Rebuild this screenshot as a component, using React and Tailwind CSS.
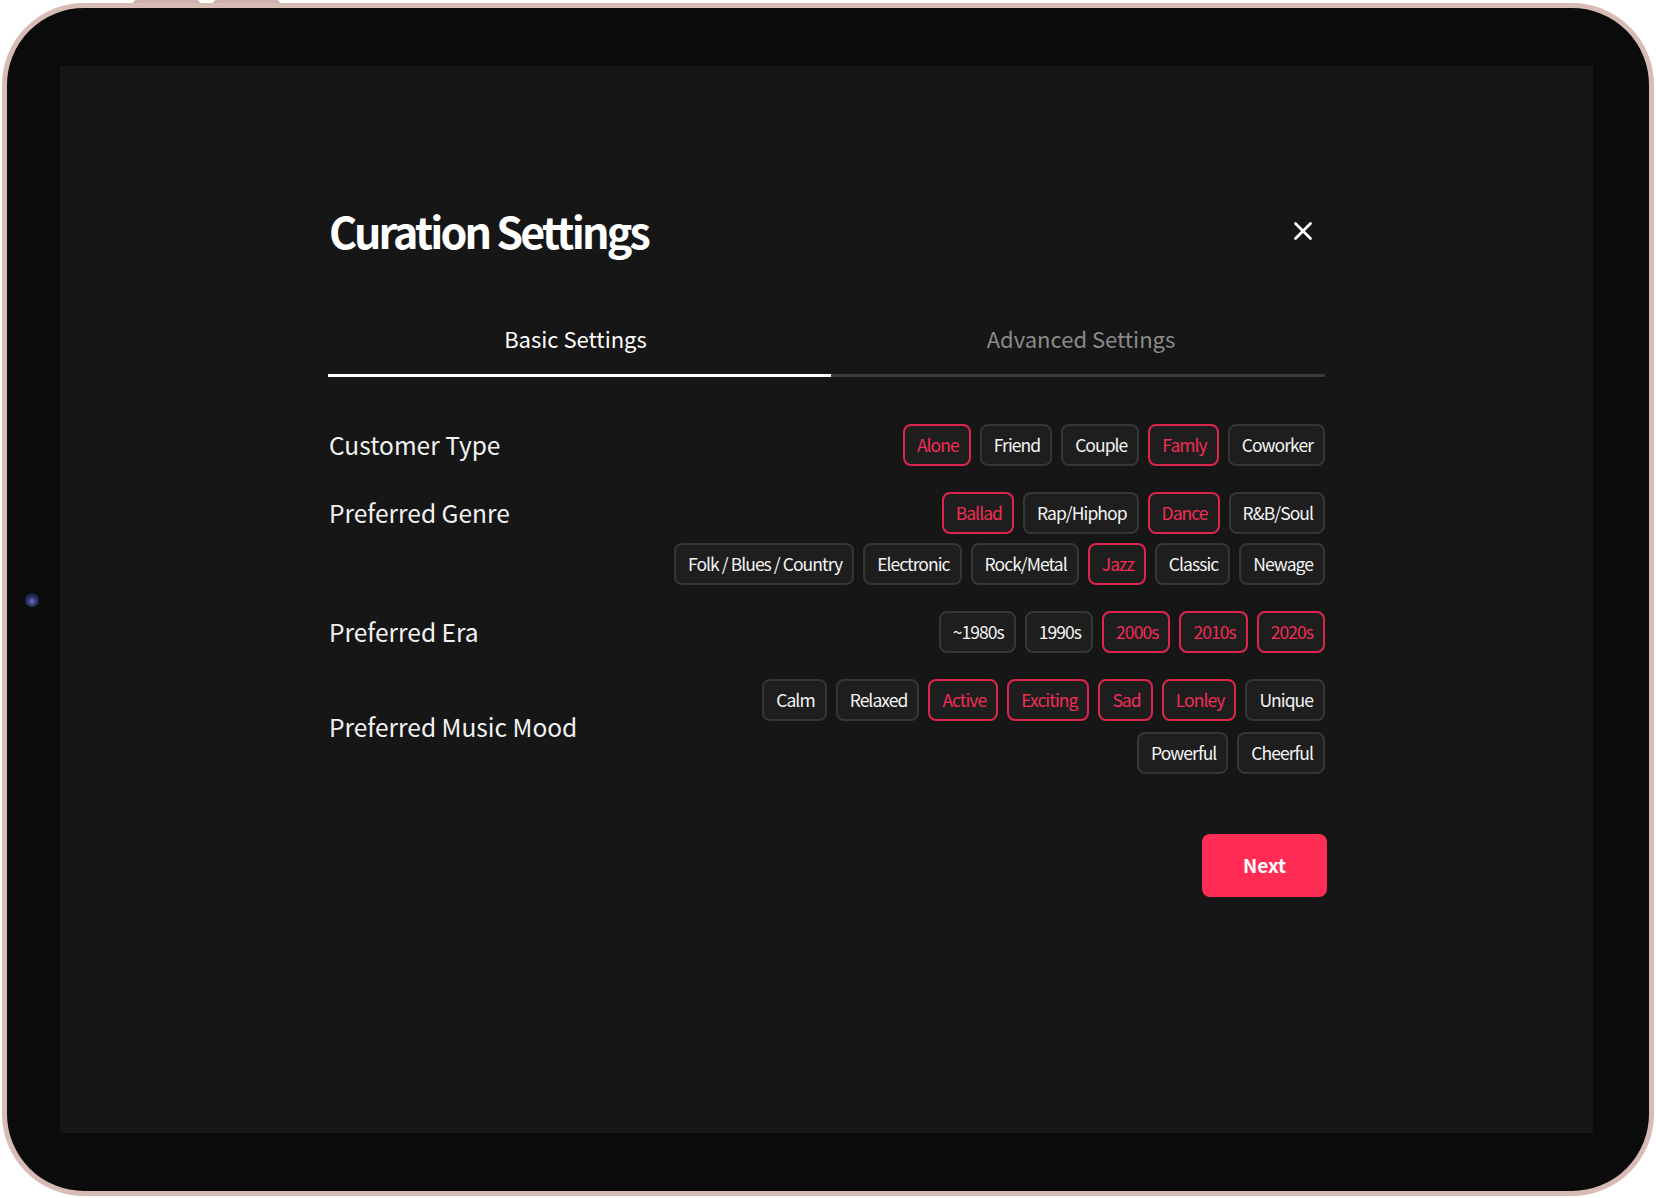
import React, { useState } from 'react';
import { X } from 'lucide-react';

// option groups for the basic tab, one array per chip row
const sections = [
  {
    title: 'Customer Type',
    rows: [['Alone', 'Friend', 'Couple', 'Famly', 'Coworker']],
  },
  {
    title: 'Preferred Genre',
    top: true,
    rows: [
      ['Ballad', 'Rap/Hiphop', 'Dance', 'R&B/Soul'],
      ['Folk / Blues / Country', 'Electronic', 'Rock/Metal', 'Jazz', 'Classic', 'Newage'],
    ],
  },
  {
    title: 'Preferred Era',
    rows: [['~1980s', '1990s', '2000s', '2010s', '2020s']],
  },
  {
    title: 'Preferred Music Mood',
    wide: true,
    rows: [
      ['Calm', 'Relaxed', 'Active', 'Exciting', 'Sad', 'Lonley', 'Unique'],
      ['Powerful', 'Cheerful'],
    ],
  },
];

const defaultPicked = ['Alone', 'Famly', 'Ballad', 'Dance', 'Jazz', '2000s', '2010s', '2020s', 'Active', 'Exciting', 'Sad', 'Lonley'];

function Chip({ label, active, onClick }) {
  return (
    <button
      onClick={onClick}
      className={
        active
          ? 'flex h-[42px] items-center rounded-[8px] border-2 border-[#dc254c] bg-[#1e1e1e] pl-[12px] pr-[10px] text-[17.5px] leading-none tracking-[-0.95px] text-[#f12d56]'
          : 'flex h-[42px] items-center rounded-[8px] border-2 border-[#363636] bg-[#1e1e1e] pl-[12px] pr-[10px] text-[17.5px] leading-none tracking-[-0.95px] text-[#f4f4f4]'
      }
    >
      {label}
    </button>
  );
}

function OptionRow({ section, picked, onToggle }) {
  return (
    <div className={section.top ? 'flex items-start justify-between' : 'flex items-center justify-between'}>
      <h3 className="ml-[1px] text-[24.5px] leading-[42px] text-[#f2f2f2]">{section.title}</h3>
      <div className={section.wide ? 'flex flex-col items-end gap-[11px]' : 'flex flex-col items-end gap-[9px]'}>
        {section.rows.map((row, i) => (
          <div key={i} className="flex gap-[9px]">
            {row.map((name) => (
              <Chip key={name} label={name} active={picked.has(name)} onClick={() => onToggle(name)} />
            ))}
          </div>
        ))}
      </div>
    </div>
  );
}

export default function App() {
  const [tab, setTab] = useState('basic');
  const [picked, setPicked] = useState(() => new Set(defaultPicked));

  const toggle = (name) =>
    setPicked((prev) => {
      const next = new Set(prev);
      if (next.has(name)) next.delete(name);
      else next.add(name);
      return next;
    });

  return (
    <div className="relative h-[1198px] w-[1656px] overflow-hidden bg-white font-['Noto_Sans_CJK_KR','Noto_Sans',sans-serif]">
      {/* volume keys on the top edge */}
      <div className="absolute left-[133px] top-0 h-[8px] w-[67px] rounded-t-[4px] bg-[#cdb1ab]" />
      <div className="absolute left-[213px] top-0 h-[8px] w-[67px] rounded-t-[4px] bg-[#cdb1ab]" />

      {/* tablet body */}
      <div className="relative ml-[2px] mt-[3px] h-[1193px] w-[1652px] rounded-[82px] border-[5px] border-[#d7bbb5] bg-[#0b0b0b] pb-[58px] pl-[53px] pr-[56px] pt-[58px]">
        {/* front camera */}
        <div className="absolute left-[18px] top-1/2 h-[14px] w-[14px] -translate-y-1/2 rounded-full bg-[radial-gradient(circle_at_50%_60%,#6670d0_0%,#2a2f5c_45%,#101018_100%)]" />

        <div className="h-full bg-[#161616] pt-[142px]">
          <div className="mx-auto w-[997px]">
            <div className="flex h-[44px] items-center justify-between">
              <h1 className="ml-[1px] text-[43px] font-bold leading-[44px] tracking-[-2.8px] text-white">Curation Settings</h1>
              <button className="mr-[7px] mt-[2px] text-white">
                <X size={30} strokeWidth={2.2} />
              </button>
            </div>

            <div className="mt-[76px] flex">
              <button
                onClick={() => setTab('basic')}
                className={
                  tab === 'basic'
                    ? 'w-[503px] border-b-[3px] border-white pb-[25px] pr-[8px] text-[22px] leading-[21px] text-white'
                    : 'w-[503px] border-b-[3px] border-[#3a3a3a] pb-[25px] pr-[8px] text-[22px] leading-[21px] text-[#8a8a8a]'
                }
              >
                Basic Settings
              </button>
              <button
                onClick={() => setTab('advanced')}
                className={
                  tab === 'advanced'
                    ? 'flex-1 border-b-[3px] border-white pb-[25px] pl-[6px] text-[22px] leading-[21px] text-white'
                    : 'flex-1 border-b-[3px] border-[#3a3a3a] pb-[25px] pl-[6px] text-[22px] leading-[21px] text-[#8a8a8a]'
                }
              >
                Advanced Settings
              </button>
            </div>

            <div className="mt-[47px] flex flex-col gap-[26px]">
              {sections.map((s) => (
                <OptionRow key={s.title} section={s} picked={picked} onToggle={toggle} />
              ))}
            </div>

            <div className="mt-[60px] flex justify-end">
              <button className="-mr-[2px] h-[63px] w-[125px] rounded-[8px] bg-[#ff2d55] text-[19px] font-bold text-white">
                Next
              </button>
            </div>
          </div>
        </div>
      </div>
    </div>
  );
}
